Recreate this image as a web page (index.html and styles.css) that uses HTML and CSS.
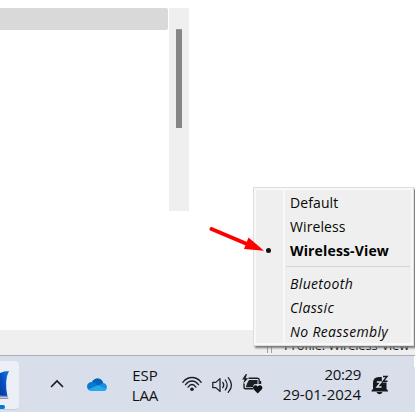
FILE: index.html
```html
<!DOCTYPE html>
<html lang="es">
<head>
<meta charset="utf-8">
<title>Profiles</title>
<link rel="stylesheet" href="styles.css">
</head>
<body>
<div class="screen">
  <main class="pane">
    <div class="selected-row"></div>
    <div class="scrollbar"><div class="thumb"></div></div>
  </main>
  <footer class="statusbar"><div class="profile"><span>Profile: Wireless-View</span></div></footer>
  <nav class="taskbar">
    <div class="app">
      <svg width="19" height="49" viewBox="0 0 19 49">
        <defs><linearGradient id="fin" x1="1" y1="0" x2="0" y2="1"><stop offset="0" stop-color="#1479e8"/><stop offset=".5" stop-color="#0751c5"/><stop offset="1" stop-color="#06379b"/></linearGradient></defs>
        <path d="M0 12Q4 10 9 10Q4 19 7.500 36L0 35Z" fill="url(#fin)"/>
        <path d="M0 34.500L7.500 35L8.500 38H0Z" fill="#8795b8"/>
        <path d="M0 36.500H8" stroke="#d5dcec" stroke-width=".7"/>
        <path d="M0 44H3.500Q5 44 5 46T3.500 48H0Z" fill="#0878d4"/>
      </svg>
    </div>
    <svg class="chevron" width="14" height="10" viewBox="0 0 14 10"><path d="M1 8L7 2L13 8" fill="none" stroke="#17191c" stroke-width="1.600"/></svg>
    <svg class="cloud" width="20" height="14" viewBox="0 0 20 14">
      <path d="M4 12.500A4 4 0 0 1 .2 8.500Q.2 4.500 5 4Q7 .3 10.500 .4Q15 .6 16.200 5Q20 5.500 19.800 9.500Q19.400 13 16 13H4Z" fill="#1490df"/>
      <path d="M5 4Q7 .3 10.500 .4Q15 .6 16.200 5L11 7.500Z" fill="#0663b8"/>
      <path d="M5 4Q.2 4.500 .2 8.500Q.3 10 1.500 11.500L11 7.200Q8 4.200 5 4Z" fill="#087bd1"/>
      <path d="M11 7.200L1.500 11.500Q2.500 13 5 13H16Q18.500 13 19.500 11Z" fill="#28a8ea"/>
    </svg>
    <div class="lang"><span>ESP</span><span>LAA</span></div>
    <svg class="wifi" width="20" height="16" viewBox="0 0 20 16">
      <g fill="none" stroke="#1b1e22" stroke-width="1.350" stroke-linecap="round"><path d="M.8 6.300Q4.500 1.500 10 1.500T19.200 6.300"/><path d="M3.500 8.700Q6.300 5 10 5T16.500 8.700"/><path d="M6.100 11.100Q7.800 8.500 10 8.500T13.900 11.100"/></g><circle cx="10" cy="13.200" r="1.800" fill="#1b1e22"/>
    </svg>
    <svg class="sound" width="21" height="18" viewBox="0 0 21 18">
      <g fill="none" stroke="#1b1e22" stroke-width="1.250" stroke-linecap="round" stroke-linejoin="round"><path d="M.8 6.400H3.800L8 2.600V15.400L3.800 11.600H.8Z"/><path d="M10.800 6.300Q12.700 9 10.800 11.700"/><path d="M13.300 4Q17 9 13.300 14"/><path d="M16.200 1.600Q22.800 9 16.200 16.400"/></g>
    </svg>
    <svg class="battery" width="21" height="20" viewBox="0 0 21 20">
      <path d="M6.500 4.200H15.500Q17.200 4.200 17.200 6V10M2 9.500V13Q2 14.800 3.600 14.800H11" fill="none" stroke="#1b1e22" stroke-width="1.400"/>
      <path d="M7 6H15.500V10L12 10.200L10.800 13.200H3.800L5 9.500Z" fill="#1b1e22"/>
      <path d="M17.800 7H19.200V10H17.800Z" fill="#1b1e22"/>
      <path d="M3.800 0L.2 5.500H2.400L1.300 9.500L6.200 4.200H3.700L5 0Z" fill="#1b1e22"/>
      <path d="M15.700 19.500L11.500 15.300Q10.400 13.700 11.500 12.200Q13.600 10.200 15.700 12.400Q17.800 10.200 19.900 12.200Q21 13.700 19.900 15.300Z" fill="#111417"/>
    </svg>
    <div class="clock"><span>20:29</span><span class="date">29-01-2024</span></div>
    <svg class="bell" width="18" height="20" viewBox="0 0 18 20">
      <path d="M2 14V8Q2 2 8 2H11V7H15.500V14L17 15.500V16.500H.5V15.500Z" fill="#15191d"/><path d="M5.500 17H11.500Q10.500 19.300 8.500 19.300T5.500 17Z" fill="#15191d"/>
      <path d="M5.800 7H10.200L6 12H10.500" fill="none" stroke="#dce1ec" stroke-width="1.400"/>
      <path d="M10.800 .5H18V7.500H11.800L10.800 5Z" fill="#d8deea"/><path d="M12 1.500H16L12.200 6.300H16.500" fill="none" stroke="#15191d" stroke-width="1.400"/>
    </svg>
  </nav>
  <div class="menu">
    <div class="item default">Default</div>
    <div class="item wireless">Wireless</div>
    <div class="item checked">Wireless-View</div>
    <div class="separator"></div>
    <div class="item preset bluetooth">Bluetooth</div>
    <div class="item preset classic">Classic</div>
    <div class="item preset reassembly">No Reassembly</div>
  </div>
  <svg class="arrow" width="56" height="28" viewBox="0 0 56 28"><path d="M2.500 4L38 19" stroke="#f00" stroke-width="4" stroke-linecap="round"/><path d="M39.500 12.500L55 25.800L35 24Z" fill="#f00"/></svg>
</div>
</body>
</html>
```
FILE: styles.css
```css
* { box-sizing: border-box; }
body { margin: 0; font-family: "Open Sans", "Noto Sans", sans-serif; font-size: 14px; color: #111; }
svg { display: block; flex: none; }
.screen { position: relative; width: 415px; height: 412px; overflow: hidden; background: #fff; display: flex; flex-direction: column; }
.pane { height: 330px; padding-top: 8px; display: flex; gap: 1px; }
.selected-row { width: 168px; height: 22px; background: #d9d9d9; border-radius: 0 2px 2px 0; }
.scrollbar { width: 20px; height: 203px; padding: 21px 6px 0 7px; background: #efefef; }
.thumb { width: 6px; height: 99px; background: #858585; border-top: 1px solid #999; }
.statusbar { height: 26px; background: #efefef; border-bottom: 1px solid #aaadb5; display: flex; padding-left: 267px; }
.profile { width: 147px; height: 23px; border-left: 1px solid #a0a0a0; padding-left: 3px; line-height: 31px; font-size: 13px; white-space: nowrap; }
.profile span { display: block; border-left: 1px solid #a0a0a0; padding-left: 12px; height: 23px; letter-spacing: -.2px; }
.taskbar { height: 56px; background: linear-gradient(#fff, #fff) 414px 0 / 1px 11px no-repeat, #d8deea; display: flex; align-items: flex-start; }
.app { width: 19px; height: 49px; margin-top: 5px; background: #eceff6; border-radius: 0 4px 4px 0; border-bottom: 1px solid #c8ceda; }
.chevron { margin: 23px 0 0 31px; }
.cloud { margin: 22px 0 0 23px; }
.lang { margin: 9px 0 0 20px; width: 36px; text-align: center; display: flex; flex-direction: column; line-height: 20px; font-size: 15px; }
.lang span { letter-spacing: -.1px; }
.wifi { margin: 20px 0 0 19px; }
.sound { margin: 20px 0 0 10px; }
.battery { margin: 18px 0 0 9px; }
.clock { margin: 8px 0 0 10px; width: 88px; text-align: right; display: flex; flex-direction: column; line-height: 20px; font-size: 15px; letter-spacing: -.35px; }
.date { letter-spacing: 0; }
.bell { margin: 19px 0 0 10px; }
.menu { position: absolute; left: 253px; top: 187px; width: 161px; height: 159px; padding: 3px 2px; border: 1px solid #dedede; background: linear-gradient(#f8f8f8, #f8f8f8) 29px 0 / 2px 100% no-repeat, #efefef; box-shadow: inset 0 0 0 2px #f8f8f8, 2px 2px 2px #777; color: #080808; }
.item { height: 24px; line-height: 24px; padding-left: 34px; white-space: nowrap; }
.default, .wireless { letter-spacing: .1px; }
.checked { font-weight: 700; position: relative; color: #000; letter-spacing: .15px; }
.checked::before { content: ""; position: absolute; left: 10px; top: 9px; width: 5px; height: 5px; border-radius: 50%; background: #111; }
.preset { font-style: italic; letter-spacing: .35px; }
.separator { height: 9px; margin: 0 1px 0 30px; background: linear-gradient(#d4d4d4, #d4d4d4) 0 3px / 100% 1px no-repeat; }
.arrow { position: absolute; left: 209px; top: 225px; }
```
